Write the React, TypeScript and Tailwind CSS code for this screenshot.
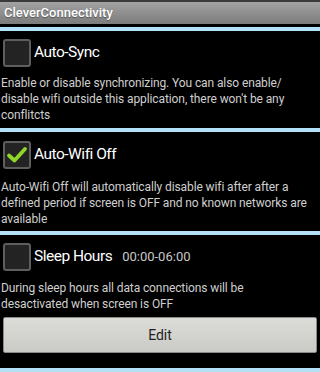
import { ReactNode } from 'react';

const FONT = { fontFamily: 'Roboto, "Noto Sans", sans-serif' };

function Box({ checked }: { checked?: boolean }) {
    return (
        <div className="flex h-[28px] w-[28px] shrink-0 items-center justify-center rounded-[3px] border-2 border-[#5e5e5e] bg-[#232323]">
            {checked && (
                <svg width="22" height="20" viewBox="0 0 22 20">
                    <path d="M3 10.5 L8.5 15.5 L19 4" fill="none" stroke="#8fd52a" strokeWidth="3.8" strokeLinecap="round" strokeLinejoin="round" />
                </svg>
            )}
        </div>
    );
}

function Divider() {
    return <div className="h-[4px] bg-[#b2e1f8]" />;
}

function Head({ checked, title, extra }: { checked?: boolean; title: string; extra?: string }) {
    return (
        <div className="flex items-center pl-[3px]">
            <Box checked={checked} />
            <span className="ml-[3px] text-[15.5px] tracking-[-0.5px] text-white">{title}</span>
            {extra && <span className="ml-[10px] text-[13px] text-[#c8c8c8]">{extra}</span>}
        </div>
    );
}

function Desc({ mt, children }: { mt: string; children: ReactNode }) {
    return <p className={`${mt} pl-[1px] pr-[6px] text-[12px] leading-[16px] tracking-[-0.1px] text-[#cfcfcf]`}>{children}</p>;
}

export default function App() {
    return (
        <div className="h-[372px] w-[320px] overflow-hidden bg-black" style={FONT}>
            {/* Title bar */}
            <div className="h-[2px] bg-[#3a3a3a]" />
            <div className="flex h-[22px] items-center bg-gradient-to-b from-[#a2a2a2] to-[#7c7c7c] pl-[4px]">
                <span className="text-[13px] font-medium text-white [text-shadow:0_1px_1px_rgba(0,0,0,0.4)]">CleverConnectivity</span>
            </div>
            <div className="h-[3px] bg-black" />
            <Divider />

            <div className="pt-[8px] pb-[5px]">
                <Head title="Auto-Sync" />
                <Desc mt="mt-[8px]">
                    Enable or disable synchronizing. You can also enable/ disable wifi outside this application, there won't be any conflitcts
                </Desc>
            </div>
            <Divider />

            <div className="pt-[9px] pb-[4px]">
                <Head checked title="Auto-Wifi Off" />
                <Desc mt="mt-[10px]">
                    Auto-Wifi Off will automatically disable wifi after after a defined period if screen is OFF and no known networks are available
                </Desc>
            </div>
            <Divider />

            <div className="pt-[8px]">
                <Head title="Sleep Hours" extra="00:00-06:00" />
                <Desc mt="mt-[9px]">
                    During sleep hours all data connections will be
                    <br />
                    desactivated when screen is OFF
                </Desc>
                <div className="px-[3px] pt-[5px] pb-[15px]">
                    <button className="flex h-[36px] w-full items-center justify-center rounded-[2px] border border-[#8a8a8a] bg-gradient-to-b from-[#dcdcd8] to-[#cacac6] text-[14px] text-[#1e1e1e]">
                        Edit
                    </button>
                </div>
            </div>
            <Divider />
        </div>
    );
}
